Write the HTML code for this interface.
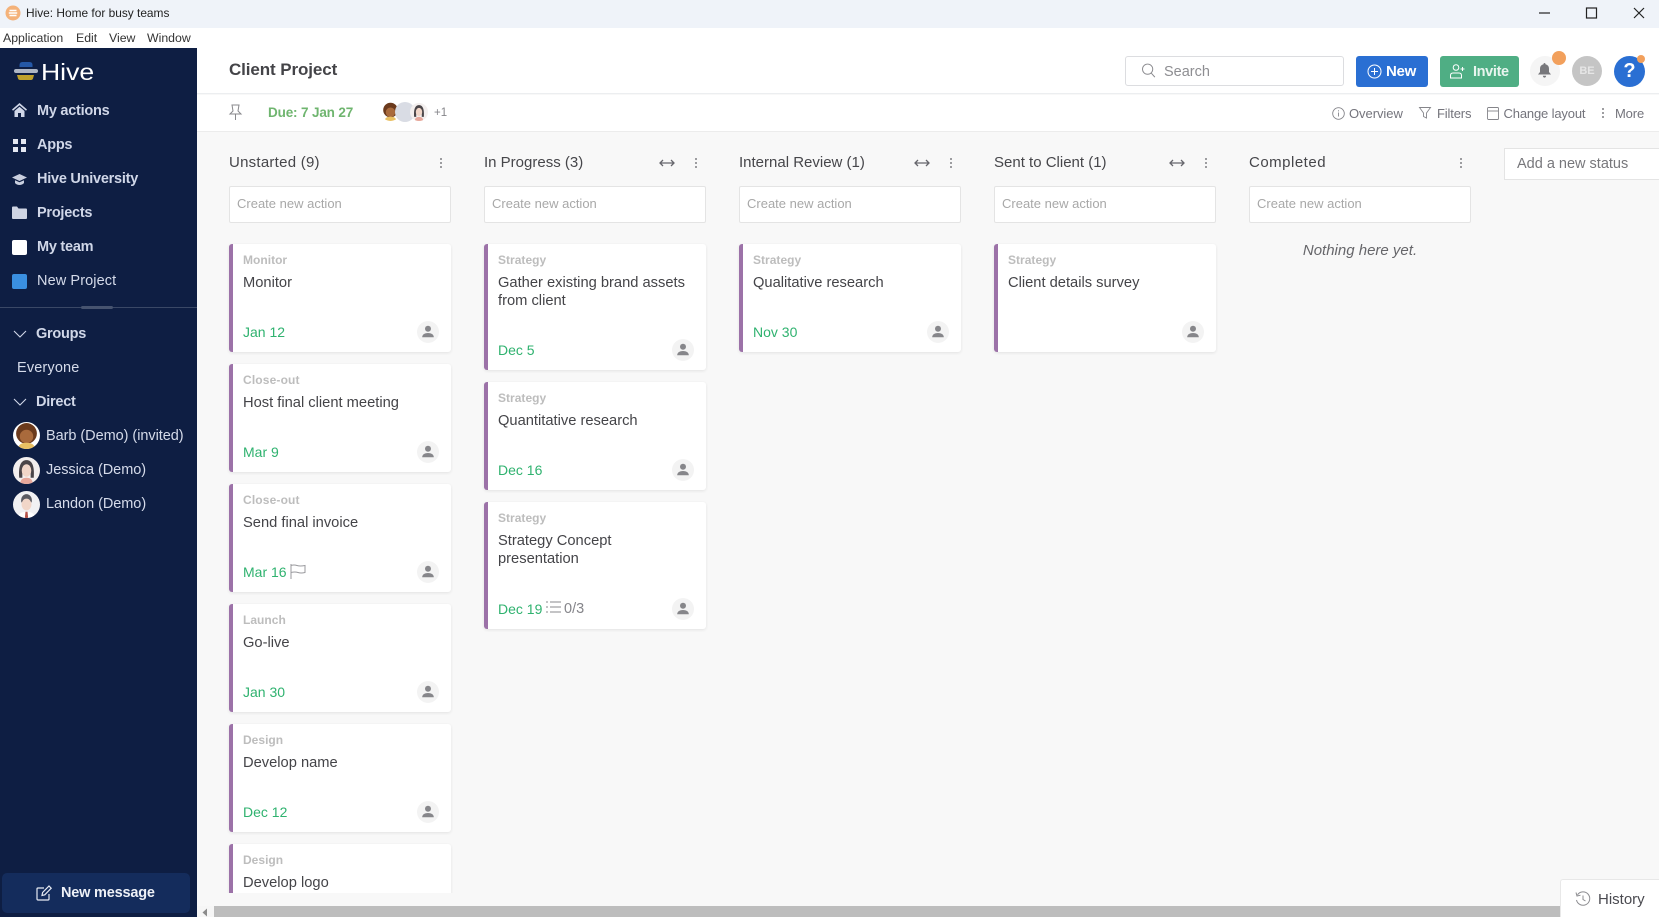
<!DOCTYPE html>
<html lang="en">
<head>
<meta charset="utf-8">
<title>Hive: Home for busy teams</title>
<style>
html,body{margin:0;padding:0;width:1659px;height:917px;overflow:hidden;background:#f8f8f8;font-family:"Liberation Sans",sans-serif;color:#3f3f44}
*{box-sizing:border-box}
.a{position:absolute;white-space:nowrap}
svg{position:absolute;overflow:visible}
#tb{left:0;top:0;width:1659px;height:28px;background:#eff3f9}
#mb{left:0;top:28px;width:1659px;height:20px;background:#fff}
#sb{left:0;top:48px;width:197px;height:869px;background:#0e1e43}
#hd{left:197px;top:48px;width:1462px;height:46px;background:#fff;border-bottom:1px solid #eceef0}
#sub{left:197px;top:95px;width:1462px;height:37px;background:#fff;border-bottom:1px solid #ececec}
.m{font-size:12.3px;color:#333;top:30px;line-height:16px}
.n{font-size:14.5px;font-weight:bold;color:#d0d7e8;left:37px;line-height:18px;letter-spacing:-.25px}
.n.l{font-weight:normal;letter-spacing:-.05px;color:#d5dbea}
.h{font-size:15px;color:#46464a;top:153px;line-height:19px}
.inp{width:222px;height:37px;top:186px;background:#fff;border:1px solid #e4e4e4;border-radius:2px;font-size:13px;color:#a8a8a8;padding:0 7px;line-height:33px}
.c{width:222px;background:#fff;border-left:4px solid #9c72a8;border-radius:3px;box-shadow:0 1px 3px rgba(0,0,0,.09)}
.c .t{position:absolute;left:10px;top:9px;font-size:12px;font-weight:bold;color:#bdbdbd;line-height:15px;letter-spacing:.02px}
.c .x{position:absolute;left:10px;top:30px;font-size:14.7px;color:#444448;line-height:18px;width:205px;white-space:normal}
.c .d{position:absolute;left:10px;bottom:11px;font-size:14px;color:#2fb26f;line-height:18px}
.c .u{position:absolute;right:12px;bottom:9px;width:22px;height:22px;border-radius:50%;background:#f3f3f3}
.r2{font-size:13px;color:#74747c;top:106px;line-height:15px;letter-spacing:-.15px}
.av{position:absolute;border-radius:50%;overflow:hidden}
.av svg{position:static;display:block}
</style>
</head>
<body>
<svg width="0" height="0" style="position:absolute">
<defs>
<symbol id="user" viewBox="0 0 22 22"><circle cx="11" cy="7.8" r="3" fill="#86868a"/><path d="M5.2 16.2c0-2.8 2.7-4.2 5.8-4.2s5.8 1.4 5.8 4.2z" fill="#86868a"/></symbol>
<symbol id="dots" viewBox="0 0 4 12"><circle cx="2" cy="2" r="1" fill="#808084"/><circle cx="2" cy="6" r="1" fill="#808084"/><circle cx="2" cy="10" r="1" fill="#808084"/></symbol>
<symbol id="arr" viewBox="0 0 16 8"><path d="M1 4h14M4 1L1 4l3 3M12 1l3 3-3 3" fill="none" stroke="#66666c" stroke-width="1.3"/></symbol>
<symbol id="barb" viewBox="0 0 26 26"><rect width="26" height="26" fill="#fff"/><circle cx="13" cy="11" r="10" fill="#6b3a1c"/><ellipse cx="13" cy="14" rx="6.5" ry="6.5" fill="#a96a3c"/><path d="M5 26c0-4 3-6 8-6s8 2 8 6z" fill="#e9c063"/></symbol>
<symbol id="jess" viewBox="0 0 26 26"><rect width="26" height="26" fill="#f3efee"/><path d="M6 20C5 8 8 3 13 3s8 5 7 17h-3V12H9v8z" fill="#4a4548"/><ellipse cx="13" cy="13" rx="4.6" ry="6" fill="#f1d6c8"/><path d="M7 26c0-4 2-6 6-6s6 2 6 6z" fill="#e7a79a"/></symbol>
<symbol id="land" viewBox="0 0 26 26"><rect width="26" height="26" fill="#f1f1f3"/><path d="M8 11C7 6 10 3 13 3s6 3 5 8z" fill="#5b5b62"/><ellipse cx="13" cy="13" rx="4.8" ry="5.6" fill="#f1d6c8"/><path d="M5 26c0-4 3-6 8-6s8 2 8 6z" fill="#fff"/><path d="M12 20h2l.6 6h-3.2z" fill="#b5534a"/></symbol>
</defs>
</svg>

<div class="a" id="tb"></div>
<svg style="left:5px;top:5px" width="16" height="16" viewBox="0 0 16 16"><circle cx="8" cy="8" r="7.5" fill="#f4b27a"/><path d="M4.5 5.500h7M3.800 8h8.400M4.500 10.500h7" stroke="#fff" stroke-width="1.400"/></svg>
<div class="a" style="left:26px;top:5px;font-size:11.9px;line-height:16px;color:#222">Hive: Home for busy teams</div>
<svg style="left:1537px;top:6px" width="110" height="14" viewBox="0 0 110 14" fill="none" stroke="#222" stroke-width="1.200"><path d="M2 7h11"/><rect x="49.5" y="2" width="10" height="10"/><path d="M97 2l10 10M107 2L97 12"/></svg>

<div class="a" id="mb"></div>
<div class="a m" style="left:3px">Application</div>
<div class="a m" style="left:76px">Edit</div>
<div class="a m" style="left:109px">View</div>
<div class="a m" style="left:147px">Window</div>

<div class="a" id="sb"></div>
<svg style="left:14px;top:61px" width="26" height="20" viewBox="0 0 26 20"><path d="M4 6V4q0-3 3-3h7q3 0 3 3v2z" transform="translate(1.500 0)" fill="#2558a6"/><rect x="0" y="8" width="24" height="4" rx="2" fill="#aeb6c4"/><path d="M3 14h17l-1 3.500q-.5 1.500-2 1.500H6q-1.500 0-2-1.500z" fill="#bfa12c"/></svg>
<div class="a" style="left:41px;top:57px;font-size:23.5px;line-height:30px;color:#fff;transform:scaleX(1.13);transform-origin:left center">Hive</div>

<svg style="left:12px;top:103px" width="15" height="14" viewBox="0 0 15 14"><path d="M7.500 0L0 6.500l1 1.200L7.500 2.300 14 7.700l1-1.200z" fill="#d0d7e8"/><path d="M2.500 8L7.500 3.800 12.500 8v6H9V10H6v4H2.500z" fill="#d0d7e8"/></svg>
<div class="a n" style="top:102px">My actions</div>
<svg style="left:13px;top:139px" width="13" height="13" viewBox="0 0 13 13" fill="#e4e8f2"><rect width="5" height="5"/><rect x="8" width="5" height="5"/><rect y="8" width="5" height="5"/><rect x="8" y="8" width="5" height="5"/></svg>
<div class="a n" style="top:136px">Apps</div>
<svg style="left:12px;top:174px" width="15" height="11" viewBox="0 0 15 11" fill="#c9cfdf"><path d="M7.500 0L15 3.500 7.500 7 0 3.500z"/><path d="M3 6.300l4.500 2 4.500-2V9c-1 1.300-2.800 2-4.500 2S4 10.300 3 9z"/></svg>
<div class="a n" style="top:170px">Hive University</div>
<svg style="left:12px;top:206px" width="15" height="13" viewBox="0 0 15 13"><path d="M0 1.500Q0 .5 1 .5h4l1.500 2H14q1 0 1 1V12q0 1-1 1H1q-1 0-1-1z" fill="#ced4e3"/></svg>
<div class="a n" style="top:204px">Projects</div>
<div class="a" style="left:12px;top:240px;width:15px;height:15px;background:#fff;border-radius:2px"></div>
<div class="a n" style="top:238px">My team</div>
<div class="a" style="left:12px;top:274px;width:15px;height:15px;background:#3a8fe0;border-radius:2px"></div>
<div class="a n l" style="top:272px;letter-spacing:.1px">New Project</div>

<div class="a" style="left:0;top:307px;width:197px;height:1px;background:#3a4866"></div>
<div class="a" style="left:81px;top:306px;width:32px;height:3px;background:#46536f;border-radius:2px"></div>

<svg style="left:13px;top:330px" width="14" height="8" viewBox="0 0 14 8"><path d="M1 1l6 6 6-6" fill="none" stroke="#d0d7e8" stroke-width="1.100"/></svg>
<div class="a n" style="left:36px;top:325px">Groups</div>
<div class="a n l" style="left:17px;top:359px;letter-spacing:.15px">Everyone</div>
<svg style="left:13px;top:398px" width="14" height="8" viewBox="0 0 14 8"><path d="M1 1l6 6 6-6" fill="none" stroke="#d0d7e8" stroke-width="1.100"/></svg>
<div class="a n" style="left:36px;top:393px">Direct</div>
<div class="av" style="left:13px;top:422px;width:27px;height:27px"><svg width="27" height="27"><use href="#barb"/></svg></div>
<div class="a n l" style="left:46px;top:427px">Barb (Demo) (invited)</div>
<div class="av" style="left:13px;top:457px;width:27px;height:27px"><svg width="27" height="27"><use href="#jess"/></svg></div>
<div class="a n l" style="left:46px;top:461px">Jessica (Demo)</div>
<div class="av" style="left:13px;top:491px;width:27px;height:27px"><svg width="27" height="27"><use href="#land"/></svg></div>
<div class="a n l" style="left:46px;top:495px">Landon (Demo)</div>

<div class="a" style="left:2px;top:873px;width:188px;height:40px;background:#142c5c;border-radius:5px"></div>
<svg style="left:36px;top:885px" width="16" height="16" viewBox="0 0 16 16" fill="none" stroke="#e6eaf3" stroke-width="1.200"><path d="M13 9v5a1 1 0 0 1-1 1H2a1 1 0 0 1-1-1V4a1 1 0 0 1 1-1h6"/><path d="M6 10.500l.6-3L13 1l2.200 2.200L8.800 9.800z"/></svg>
<div class="a" style="left:61px;top:884px;font-size:14.5px;font-weight:bold;color:#eef1f7;line-height:18px;letter-spacing:-.2px">New message</div>

<div class="a" id="hd"></div>
<div class="a" id="sub"></div>
<div class="a" style="left:229px;top:59px;font-size:17px;font-weight:bold;line-height:22px;color:#444448;letter-spacing:-.1px">Client Project</div>

<div class="a" style="left:1125px;top:56px;width:219px;height:30px;background:#fff;border:1px solid #dcdde0;border-radius:3px"></div>
<svg style="left:1141px;top:63px" width="15" height="15" viewBox="0 0 16 17" fill="none" stroke="#8a8a8e" stroke-width="1.100"><circle cx="7" cy="7" r="5.800"/><path d="M11.200 11.500l4 4.500"/></svg>
<div class="a" style="left:1164px;top:63px;font-size:14.5px;line-height:18px;color:#8e8e92">Search</div>

<div class="a" style="left:1356px;top:56px;width:72px;height:31px;background:#2a6fd3;border-radius:3px"></div>
<svg style="left:1367px;top:64px" width="15" height="15" viewBox="0 0 15 15" fill="none" stroke="#fff" stroke-width="1"><circle cx="7.500" cy="7.500" r="6.500"/><path d="M7.500 4v7M4 7.500h7"/></svg>
<div class="a" style="left:1386px;top:63px;font-size:15px;font-weight:bold;color:#fff;line-height:18px;letter-spacing:-.3px">New</div>
<div class="a" style="left:1440px;top:56px;width:79px;height:31px;background:#4fae84;border-radius:3px"></div>
<svg style="left:1450px;top:64px" width="16" height="15" viewBox="0 0 16 15" fill="none" stroke="#fff" stroke-width="1"><circle cx="6" cy="3.500" r="2.800"/><path d="M.5 14v-2.500q0-2.500 2.500-2.500h6q2.500 0 2.500 2.500V14zM12.500 3v4M10.500 5h4"/></svg>
<div class="a" style="left:1473px;top:63px;font-size:14.5px;font-weight:bold;color:#e8f5ef;line-height:18px;letter-spacing:-.35px">Invite</div>

<div class="a" style="left:1530px;top:56px;width:30px;height:30px;border-radius:50%;background:#f5f5f5"></div>
<svg style="left:1538px;top:63px" width="13" height="15" viewBox="0 0 13 15" fill="#77777b"><path d="M6.500 0q1 0 1 1.200Q11 2 11 6v3l2 2.500H0L2 9V6q0-4 3.500-4.800Q5.500 0 6.500 0z"/><path d="M4.800 12.800h3.400q-.4 1.800-1.700 1.800t-1.700-1.800z"/></svg>
<div class="a" style="left:1552px;top:51px;width:14px;height:14px;border-radius:50%;background:#f2a05c"></div>
<div class="a" style="left:1572px;top:56px;width:30px;height:30px;border-radius:50%;background:#c5c5c5;color:#e6e6e6;font-size:11px;font-weight:bold;text-align:center;line-height:30px">BE</div>
<div class="a" style="left:1614px;top:56px;width:31px;height:31px;border-radius:50%;background:#2a6fd3;color:#fff;font-size:20px;font-weight:bold;text-align:center;line-height:31px">?</div>
<div class="a" style="left:1637px;top:55px;width:8px;height:8px;border-radius:50%;background:#f2a05c"></div>

<svg style="left:229px;top:104px" width="13" height="17" viewBox="0 0 13 17" fill="none" stroke="#88888c" stroke-width="1"><path d="M3 1h7L9 7l3 3H1l3-3zM6.500 10v6"/></svg>
<div class="a" style="left:268px;top:104px;font-size:13.5px;font-weight:bold;color:#6fb56f;line-height:17px;letter-spacing:-.15px">Due: 7 Jan 27</div>
<div class="av" style="left:381px;top:102px;width:19px;height:19px"><svg width="19" height="19"><use href="#barb"/></svg></div>
<div class="a" style="left:395px;top:102px;width:20px;height:20px;border-radius:50%;background:#d9dce4"></div>
<div class="av" style="left:410px;top:103px;width:18px;height:18px"><svg width="18" height="18"><use href="#jess"/></svg></div>
<div class="a" style="left:434px;top:106px;font-size:11.5px;line-height:15px;color:#85858a">+1</div>

<svg style="left:1332px;top:107px" width="13" height="13" viewBox="0 0 13 13" fill="none" stroke="#85858a" stroke-width=".9"><circle cx="6.500" cy="6.500" r="5.800"/><path d="M6.500 5.500v4M6.500 3.200v1.200"/></svg>
<div class="a r2" style="left:1349px;letter-spacing:-.05px">Overview</div>
<svg style="left:1419px;top:107px" width="12" height="12" viewBox="0 0 12 12" fill="none" stroke="#85858a" stroke-width=".9"><path d="M.5 .5h11L7.500 6v5l-3-1.500V6z"/></svg>
<div class="a r2" style="left:1437px">Filters</div>
<svg style="left:1487px;top:107px" width="12" height="13" viewBox="0 0 12 13" fill="none" stroke="#85858a" stroke-width=".9"><rect x=".5" y=".5" width="11" height="12" rx="1"/><path d="M.5 4h11"/></svg>
<div class="a r2" style="left:1503.5px">Change layout</div>
<svg style="left:1601px;top:107px" width="4" height="12"><use href="#dots"/></svg>
<div class="a r2" style="left:1615px">More</div>

<!-- Column heads -->
<div class="a h" style="left:229px;letter-spacing:.25px">Unstarted (9)</div>
<svg style="left:439px;top:157px" width="4" height="12"><use href="#dots"/></svg>
<div class="a h" style="left:484px">In Progress (3)</div>
<svg style="left:659px;top:159px" width="16" height="8"><use href="#arr"/></svg>
<svg style="left:694px;top:157px" width="4" height="12"><use href="#dots"/></svg>
<div class="a h" style="left:739px">Internal Review (1)</div>
<svg style="left:914px;top:159px" width="16" height="8"><use href="#arr"/></svg>
<svg style="left:949px;top:157px" width="4" height="12"><use href="#dots"/></svg>
<div class="a h" style="left:994px">Sent to Client (1)</div>
<svg style="left:1169px;top:159px" width="16" height="8"><use href="#arr"/></svg>
<svg style="left:1204px;top:157px" width="4" height="12"><use href="#dots"/></svg>
<div class="a h" style="left:1249px;letter-spacing:.5px">Completed</div>
<svg style="left:1459px;top:157px" width="4" height="12"><use href="#dots"/></svg>
<div class="a" style="left:1504px;top:148px;width:160px;height:32px;background:#fff;border:1px solid #e4e4e4;padding-left:12px;font-size:14.5px;line-height:31px;color:#77777b">Add a new status</div>

<div class="a inp" style="left:229px">Create new action</div>
<div class="a inp" style="left:484px">Create new action</div>
<div class="a inp" style="left:739px">Create new action</div>
<div class="a inp" style="left:994px">Create new action</div>
<div class="a inp" style="left:1249px">Create new action</div>

<!-- Cards column 1 -->
<div class="a" style="left:225px;top:240px;width:232px;height:653px;overflow:hidden">
  <div class="a c" style="left:4px;top:4px;height:108px"><div class="t">Monitor</div><div class="x">Monitor</div><div class="d">Jan 12</div><div class="u"><svg width="22" height="22"><use href="#user"/></svg></div></div>
  <div class="a c" style="left:4px;top:124px;height:108px"><div class="t" style="letter-spacing:.15px">Close-out</div><div class="x">Host final client meeting</div><div class="d">Mar 9</div><div class="u"><svg width="22" height="22"><use href="#user"/></svg></div></div>
  <div class="a c" style="left:4px;top:244px;height:108px"><div class="t" style="letter-spacing:.15px">Close-out</div><div class="x">Send final invoice</div><div class="d">Mar 16</div><svg style="left:57px;top:80px" width="16" height="15" viewBox="0 0 16 15" fill="none" stroke="#9a9a9e" stroke-width="1"><path d="M1 0v15M1 1.500q3-1 6 0t8 0v7q-4 1-7 0t-7 0"/></svg><div class="u"><svg width="22" height="22"><use href="#user"/></svg></div></div>
  <div class="a c" style="left:4px;top:364px;height:108px"><div class="t">Launch</div><div class="x">Go-live</div><div class="d">Jan 30</div><div class="u"><svg width="22" height="22"><use href="#user"/></svg></div></div>
  <div class="a c" style="left:4px;top:484px;height:108px"><div class="t">Design</div><div class="x">Develop name</div><div class="d">Dec 12</div><div class="u"><svg width="22" height="22"><use href="#user"/></svg></div></div>
  <div class="a c" style="left:4px;top:604px;height:108px"><div class="t">Design</div><div class="x">Develop logo</div><div class="d">Dec 5</div></div>
</div>

<!-- Column 2 -->
<div class="a c" style="left:484px;top:244px;height:126px"><div class="t">Strategy</div><div class="x">Gather existing brand assets from client</div><div class="d">Dec 5</div><div class="u"><svg width="22" height="22"><use href="#user"/></svg></div></div>
<div class="a c" style="left:484px;top:382px;height:108px"><div class="t">Strategy</div><div class="x">Quantitative research</div><div class="d">Dec 16</div><div class="u"><svg width="22" height="22"><use href="#user"/></svg></div></div>
<div class="a c" style="left:484px;top:502px;height:127px"><div class="t">Strategy</div><div class="x">Strategy Concept<br>presentation</div><div class="d">Dec 19</div><svg style="left:58px;top:99px" width="15" height="12" viewBox="0 0 15 12" fill="none" stroke="#8a8a8e" stroke-width="1"><path d="M4 1h11M4 6h11M4 11h11M0 1h2M0 6h2M0 11h2"/></svg><div class="a" style="left:76px;top:98px;font-size:14.5px;line-height:18px;color:#85858a">0/3</div><div class="u"><svg width="22" height="22"><use href="#user"/></svg></div></div>

<!-- Column 3 -->
<div class="a c" style="left:739px;top:244px;height:108px"><div class="t">Strategy</div><div class="x">Qualitative research</div><div class="d">Nov 30</div><div class="u"><svg width="22" height="22"><use href="#user"/></svg></div></div>

<!-- Column 4 -->
<div class="a c" style="left:994px;top:244px;height:108px"><div class="t">Strategy</div><div class="x">Client details survey</div><div class="u"><svg width="22" height="22"><use href="#user"/></svg></div></div>

<!-- Column 5 -->
<div class="a" style="left:1249px;top:242px;width:222px;text-align:center;font-size:15px;font-style:italic;color:#66666a;line-height:18px">Nothing here yet.</div>

<!-- Scrollbar -->
<div class="a" style="left:197px;top:906px;width:1462px;height:11px;background:#f6f6f6"></div>
<div class="a" style="left:214px;top:906px;width:1346px;height:11px;background:#bdbdbd"></div>
<svg style="left:202px;top:908px" width="6" height="9" viewBox="0 0 6 9"><path d="M5 .5v8L.5 4.500z" fill="#8c8c8c"/></svg>

<!-- History -->
<div class="a" style="left:1560px;top:879px;width:99px;height:38px;background:#fff;border:1px solid #e8e8e8;border-right:0;border-bottom:0;border-top-left-radius:3px"></div>
<svg style="left:1575px;top:891px" width="16" height="16" viewBox="0 0 16 16" fill="none" stroke="#8c8c90" stroke-width="1"><path d="M2.500 3.800A6.700 6.700 0 1 1 1.500 9"/><path d="M1 1.500L2 5l3.500-.8M8 4.500v4l2.500 1.500"/></svg>
<div class="a" style="left:1598px;top:891px;font-size:15px;line-height:18px;color:#4a4a50">History</div>
</body>
</html>
